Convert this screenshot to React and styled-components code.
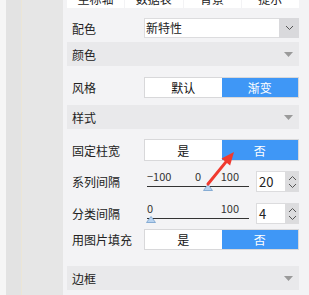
import React from "react"
import styled, { createGlobalStyle } from "styled-components"

const GlobalStyle = createGlobalStyle`
    html, body {
        margin: 0;
        padding: 0;
        background: #f3f3f5;
        font-family: "Noto Sans CJK SC", "Liberation Sans", sans-serif;
        font-size: 12px;
        color: #222;
        overflow: hidden;
    }
`

const Chevron = ({ up }) => (
    <svg width="9" height="6" viewBox="0 0 9 6">
        <path d={up ? "M1 5 L4.5 1.5 L8 5" : "M1 1 L4.5 4.5 L8 1"} fill="none" stroke="#555" strokeWidth="1" />
    </svg>
)

const Caret = () => (
    <svg width="9" height="5" viewBox="0 0 9 5">
        <path d="M0 0 H9 L4.5 5 Z" fill="#9a9a9a" />
    </svg>
)

const Slider = ({ min, max, value, labels }) => {
    const pct = ((value - min) / (max - min)) * 100
    return (
        <SliderBox>
            <Ticks>
                {labels.map((l) => (
                    <Tick key={l} style={{ left: `${((l - min) / (max - min)) * 100}%` }}>
                        {l < 0 ? "−" + Math.abs(l) : l}
                    </Tick>
                ))}
            </Ticks>
            <Track />
            <Thumb style={{ left: `${pct}%` }}>
                <svg width="10" height="7" viewBox="0 0 10 7">
                    <path d="M5 0.5 L9.5 6.5 H0.5 Z" fill="#b9d3ef" stroke="#86acd4" strokeWidth="1" />
                </svg>
            </Thumb>
        </SliderBox>
    )
}

const Spinner = ({ value }) => (
    <SpinBox>
        <SpinInput>{value}</SpinInput>
        <SpinButtons>
            <Chevron up />
            <Chevron />
        </SpinButtons>
    </SpinBox>
)

const App = () => {
    return (
        <Page>
            <GlobalStyle />
            <Rail>
                <RailEdge />
                <RailStrip />
                <RailLine />
                <RailMain />
            </Rail>
            <Panel>
                <Tabs>
                    <Tab>坐标轴</Tab>
                    <Tab>数据表</Tab>
                    <Tab>背景</Tab>
                    <Tab>提示</Tab>
                </Tabs>
                <Row $top={10} $h={20}>
                    <Label>配色</Label>
                    <Select>
                        <SelectText>新特性</SelectText>
                        <SelectButton>
                            <Chevron />
                        </SelectButton>
                    </Select>
                </Row>
                <Header $top={4}>
                    颜色
                    <Caret />
                </Header>
                <Row $top={11} $h={21}>
                    <Label>风格</Label>
                    <Toggle>
                        <ToggleItem>默认</ToggleItem>
                        <ToggleItem $active>渐变</ToggleItem>
                    </Toggle>
                </Row>
                <Header $top={7}>
                    样式
                    <Caret />
                </Header>
                <Row $top={10} $h={22}>
                    <Label>固定柱宽</Label>
                    <Toggle>
                        <ToggleItem>是</ToggleItem>
                        <ToggleItem $active>否</ToggleItem>
                    </Toggle>
                </Row>
                <Row $top={10} $h={21}>
                    <Label>系列间隔</Label>
                    <SliderRow>
                        <Slider min={-100} max={100} value={20} labels={[-100, 0, 100]} />
                        <Spinner value="20" />
                    </SliderRow>
                </Row>
                <Row $top={11} $h={21}>
                    <Label>分类间隔</Label>
                    <SliderRow>
                        <Slider min={0} max={100} value={4} labels={[0, 100]} />
                        <Spinner value="4" />
                    </SliderRow>
                </Row>
                <Row $top={5} $h={21}>
                    <Label>用图片填充</Label>
                    <Toggle>
                        <ToggleItem>是</ToggleItem>
                        <ToggleItem $active>否</ToggleItem>
                    </Toggle>
                </Row>
                <Header $top={16}>
                    边框
                    <Caret />
                </Header>
            </Panel>
            <Arrow width="40" height="50" viewBox="0 0 40 50">
                <path d="M4 42 L21.8 20.1" stroke="#f03a2f" strokeWidth="3" strokeLinecap="round" />
                <path d="M30 10 L17.5 16.6 L26.1 23.6 Z" fill="#f03a2f" />
            </Arrow>
        </Page>
    )
}

const Page = styled.div`
    position: relative;
    width: 309px;
    height: 295px;
    display: flex;
    background: #f3f3f5;
    overflow: hidden;
`
const Rail = styled.div`
    width: 63px;
    flex: none;
    display: flex;
`
const RailEdge = styled.div`
    width: 6px;
    background: #f6f6f6;
`
const RailStrip = styled.div`
    width: 15px;
    background: #e3e3e3;
`
const RailLine = styled.div`
    width: 1px;
    background: #ece6d6;
`
const RailMain = styled.div`
    flex: 1;
    background: #e6e6e6;
`
const Panel = styled.div`
    width: 232px;
    margin-left: 4px;
    display: flex;
    flex-direction: column;
`
const Tabs = styled.div`
    display: flex;
    gap: 1px;
    margin-top: -12px;
    height: 20px;
    flex: none;
`
const Tab = styled.div`
    flex: 1;
    background: #fff;
    display: flex;
    align-items: center;
    justify-content: center;
    font-size: 12px;
`
const Row = styled.div`
    height: ${(p) => p.$h}px;
    margin-top: ${(p) => p.$top}px;
    flex: none;
    display: flex;
    align-items: center;
    padding-left: 5px;
`
const Label = styled.div`
    width: 72px;
    flex: none;
    font-size: 12px;
    white-space: nowrap;
`
const Select = styled.div`
    flex: 1;
    height: 20px;
    display: flex;
    background: #fff;
    border: 1px solid #dcdcde;
    border-right: none;
    box-sizing: border-box;
`
const SelectText = styled.div`
    flex: 1;
    padding-left: 1px;
    line-height: 18px;
`
const SelectButton = styled.div`
    width: 20px;
    margin: -1px 0;
    background: #d9d9dc;
    display: flex;
    align-items: center;
    justify-content: center;
`
const Header = styled.div`
    height: 24px;
    margin-top: ${(p) => p.$top}px;
    flex: none;
    background: #e9e9eb;
    display: flex;
    align-items: center;
    justify-content: space-between;
    padding: 0 6px 0 5px;
`
const Toggle = styled.div`
    flex: 1;
    height: 100%;
    display: flex;
    border: 1px solid #d8d8da;
    box-sizing: border-box;
    background: #fff;
`
const ToggleItem = styled.div`
    flex: 1;
    display: flex;
    align-items: center;
    justify-content: center;
    background: ${(p) => (p.$active ? "#3f97f6" : "#fff")};
    color: ${(p) => (p.$active ? "#fff" : "#111")};
`
const SliderRow = styled.div`
    flex: 1;
    height: 100%;
    display: flex;
    gap: 7px;
`
const SliderBox = styled.div`
    position: relative;
    width: 102px;
    height: 21px;
    margin-left: 3px;
`
const Ticks = styled.div`
    position: relative;
    height: 14px;
`
const Tick = styled.span`
    position: absolute;
    top: -1px;
    font-size: 11px;
    line-height: 12px;
    color: #333;
    transform: translateX(-50%);
    &:first-child {
        transform: none;
    }
    &:last-child {
        transform: translateX(calc(-100% - 10px));
    }
`
const Track = styled.div`
    position: absolute;
    left: 0;
    right: 0;
    top: 15px;
    height: 1px;
    background: #333;
`
const Thumb = styled.div`
    position: absolute;
    top: 13px;
    width: 10px;
    margin-left: -5px;
    line-height: 0;
`
const SpinBox = styled.div`
    display: flex;
    height: 21px;
    width: 43px;
    border: 1px solid #dcdcde;
    border-right: none;
    box-sizing: border-box;
`
const SpinInput = styled.div`
    flex: 1;
    background: #fff;
    font-size: 13px;
    line-height: 19px;
    padding-left: 2px;
`
const SpinButtons = styled.div`
    width: 14px;
    margin: -1px 0;
    background: #dcdcde;
    display: flex;
    flex-direction: column;
    align-items: center;
    justify-content: center;
    gap: 2px;
`
const Arrow = styled.svg`
    position: absolute;
    left: 204px;
    top: 142px;
`

export default App
